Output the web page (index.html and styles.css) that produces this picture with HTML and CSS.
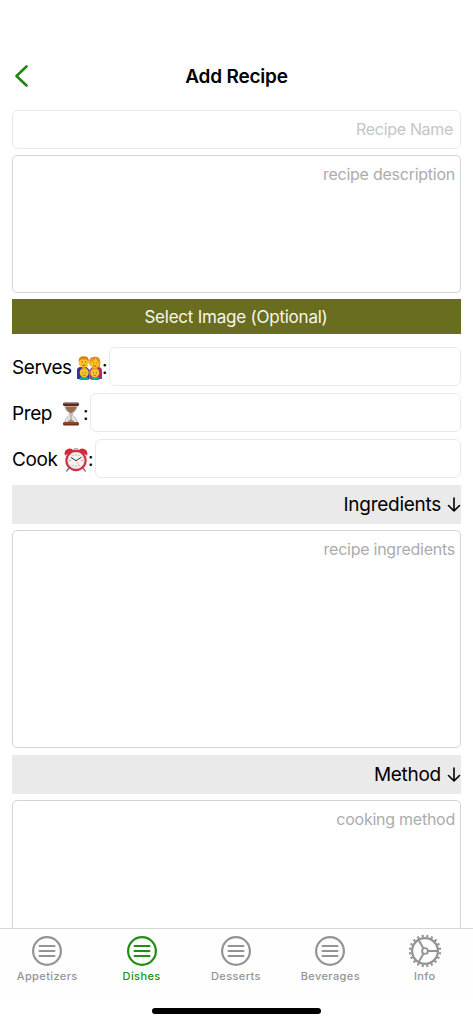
FILE: index.html
```html
<!DOCTYPE html>
<html lang="en">
<head>
<meta charset="utf-8">
<meta name="viewport" content="width=device-width, initial-scale=1">
<title>Add Recipe</title>
<link rel="stylesheet" href="styles.css">
</head>
<body>
<div class="screen">
  <header class="header">
    <svg class="back" width="18" height="26" viewBox="0 0 18 26"><path d="M14.500 3.500 4.500 13 14.500 22.500" fill="none" stroke="#208613" stroke-width="2.600" stroke-linecap="round" stroke-linejoin="round"/></svg>
    <h1 class="title">Add Recipe</h1>
  </header>
  <main class="form">
    <div class="input name"><span>Recipe Name</span></div>
    <div class="area description"><span>recipe description</span></div>
    <div class="select"><span>Select Image (Optional)</span></div>
    <div class="row">
      <span class="label serves">Serves</span>
      <svg class="emoji" width="25" height="24" viewBox="0 0 26 24" preserveAspectRatio="none">
        <path d="M0 23V14q0-3 4-3h6l3 3v9z" fill="#34339b"/>
        <path d="M13 23v-9l3-3h6q4 0 4 4v8z" fill="#b02878"/>
        <path d="M13.500 9C11 3 15 0 19 0.800 25 .5 25 7 23.500 11l-3 1h-4z" fill="#f08a13"/>
        <circle cx="7" cy="6.500" r="5.300" fill="#fbc42d"/>
        <path d="M1.800 6Q1 0 7 .2 13 0 12.200 6L10 3.500H4z" fill="#d68a08"/>
        <circle cx="18.600" cy="7" r="4.700" fill="#fdc52d"/>
        <path d="M14 6q4-1 5-4l4 5V3l-5-2z" fill="#e98a12"/>
        <path d="M5 6h1M8.500 6h1M17 7h.8M20.300 7h.8" stroke="#593c12"/>
        <path d="M5.300 9q1.800 1 3.500 0M17 9.600q1.700 1 3.200 0" fill="none" stroke="#a33a16" stroke-width=".8"/>
        <path d="M2.500 24q0-4 4.800-4T12.500 24zM14 24q0-4 4.700-4t4.800 4z" fill="#0aab99"/>
        <circle cx="7.500" cy="16.800" r="4.700" fill="#f9c72d"/><circle cx="18.500" cy="16.800" r="4.700" fill="#f9c72d"/>
        <path d="M3 15.500q.5-3.500 4.500-3.500t4.500 3.500L9 13.500H6zM14 15.500q.5-3.500 4.500-3.500t4.500 3.500l-3-2h-3z" fill="#dfa31a"/>
        <path d="M5.700 16.700h.8M8.700 16.700h.8M16.700 16.700h.8M19.700 16.700h.8" stroke="#5d3b12"/>
        <path d="M6 19q1.500.8 3 0M17 19q1.500.8 3 0" fill="none" stroke="#a33a16" stroke-width=".7"/>
      </svg>
      <span class="colon">:</span>
      <div class="input grow"></div>
    </div>
    <div class="row">
      <span class="label prep">Prep</span>
      <svg class="emoji hourglass" width="18" height="24" viewBox="0 0 18 24">
        <path d="M2.500 3h13Q15 9 10.500 11v2Q15 16 15.500 21h-13Q3 16 7.500 13v-2Q3 9 2.500 3z" fill="#dce5e8" stroke="#9ca6aa" stroke-width=".7"/>
        <path d="M3.500 4.500h11Q13.800 8.500 9.500 11h-1Q4 8.500 3.500 4.500z" fill="#9c6c49"/>
        <path d="M9 11v8" stroke="#ab7440" stroke-width=".8"/>
        <path d="M5 20.500q1-2 4-3 3 1 4 3z" fill="#b9824c"/>
        <rect x="1" y=".5" width="16" height="3.500" rx="1.500" fill="#5b2818"/><rect x="2" y="1" width="14" height="1" rx=".5" fill="#9b5538"/>
        <rect x="1" y="20" width="16" height="3.500" rx="1.500" fill="#713018"/><rect x="2" y="20.600" width="14" height="1" rx=".5" fill="#a95a38"/>
      </svg>
      <span class="colon">:</span>
      <div class="input grow"></div>
    </div>
    <div class="row">
      <span class="label cook">Cook</span>
      <svg class="emoji" width="24" height="24" viewBox="0 0 24 24">
        <path d="m5 20-2.300 3M19 20l2.300 3" stroke="#777" stroke-width="1.400" stroke-linecap="round"/>
        <path d="M1 7.500Q-.5 3 3.200 1.300 7-.6 9.500 2.500zM23 7.500q1.500-4.500-2.200-6.200Q17-.6 14.500 2.500z" fill="#d3293d"/>
        <path d="M10 2.500V.8h4v1.700" fill="none" stroke="#999"/>
        <circle cx="12" cy="12.500" r="9.600" fill="#f2f3f1" stroke="#d52c3e" stroke-width="2.200"/>
        <circle cx="12" cy="12.500" r="8.200" fill="none" stroke="#b8bdbd" stroke-width=".6"/>
        <path d="M12 6v1.500M12 17.500V19M5.500 12.500H7M17 12.500h1.500M8.700 7l.6 1M15.300 7l-.6 1M8.700 18l.6-1M15.300 18l-.6-1" stroke="#777" stroke-width=".7"/>
        <path d="M7 9.500l5 3.200 5.500-3.500" fill="none" stroke="#333" stroke-width="1"/><path d="M12 12.500l3 5" stroke="#e78e8e" stroke-width=".6"/>
      </svg>
      <span class="colon">:</span>
      <div class="input grow"></div>
    </div>
    <div class="bar"><span>Ingredients</span><svg width="14" height="16" viewBox="0 0 14 16"><path d="M7 1v13M1.500 8.500 7 14l5.500-5.500" fill="none" stroke="#000" stroke-width="1.600" stroke-linecap="round" stroke-linejoin="round"/></svg></div>
    <div class="area ingredients"><span>recipe ingredients</span></div>
    <div class="bar"><span>Method</span><svg width="14" height="16" viewBox="0 0 14 16"><path d="M7 1v13M1.500 8.500 7 14l5.500-5.500" fill="none" stroke="#000" stroke-width="1.600" stroke-linecap="round" stroke-linejoin="round"/></svg></div>
    <div class="area method"><span>cooking method</span></div>
  </main>
  <nav class="tabs">
    <div class="tab"><svg class="icon" viewBox="0 0 34 34"><use href="#list"/></svg><span>Appetizers</span></div>
    <div class="tab active"><svg class="icon" viewBox="0 0 34 34"><use href="#list"/></svg><span>Dishes</span></div>
    <div class="tab"><svg class="icon" viewBox="0 0 34 34"><use href="#list"/></svg><span>Desserts</span></div>
    <div class="tab"><svg class="icon" viewBox="0 0 34 34"><use href="#list"/></svg><span>Beverages</span></div>
    <div class="tab"><svg class="icon" viewBox="0 0 34 34">
      <g fill="none" stroke="currentColor">
        <circle cx="17" cy="17" r="12.900" stroke-width="2.200"/>
        <circle cx="17" cy="17" r="14.900" stroke-width="2.600" pathLength="200" stroke-dasharray="4.400 5.600" stroke-dashoffset="7.200"/>
        <circle cx="17" cy="17" r="2.900" stroke-width="1.900"/>
        <path d="M20 17h9.500M15.500 14.400 10.700 6.100M15.500 19.600l-4.800 8.300" stroke-width="2"/>
      </g></svg><span>Info</span></div>
  </nav>
  <footer class="home"><div class="home-bar"></div></footer>
</div>
<svg width="0" height="0" class="defs"><defs><g id="list" fill="none" stroke="currentColor"><circle cx="17" cy="17" r="13.900" stroke-width="2.200"/><path d="M9.500 12h15M9.500 17h15M9.500 22h15" stroke-width="2" stroke-linecap="round"/></g></defs></svg>
</body>
</html>
```
FILE: styles.css
```css
* { box-sizing: border-box; }
body { margin: 0; background: #fff; color: #000; font-family: Inter, "Liberation Sans", sans-serif; }
.screen { display: flex; flex-direction: column; height: 1024px; width: 473px; overflow: hidden; }
.defs { display: none; }
.header { height: 110px; flex: none; display: grid; grid-template-columns: 36px 1fr 36px; align-items: center; padding: 42px 12px 0; }
.title { margin: 0; padding-top: 1px; font-size: 19px; line-height: 24px; font-weight: 600; text-align: center; letter-spacing: -0.2px; }
.form { height: 818px; flex: none; overflow: hidden; padding: 0 12px; display: flex; flex-direction: column; }
.form > * { flex: none; }
.form span, .tab span { white-space: nowrap; }
.input { height: 39px; border: 1px solid #e9e9e9; border-radius: 6px; }
.name { display: flex; align-items: center; justify-content: flex-end; padding: 0 7px 1px 0; color: #c5c5c7; font-size: 16px; letter-spacing: -0.32px; }
.area { border: 1.5px solid #d4d4d4; border-radius: 5px; display: flex; justify-content: flex-end; padding: 8px 5px 0 0; color: #acacac; font-size: 16px; line-height: 21px; letter-spacing: -0.25px; }
.description { height: 138px; margin-top: 6px; }
.select { height: 35px; margin: 6px 0 13px; background: #696d1f; color: #f7f7ed; display: flex; align-items: center; justify-content: center; font-size: 17px; letter-spacing: -0.23px; padding-right: 1px; }
.row { display: flex; align-items: center; height: 39px; margin-bottom: 7px; font-size: 19px; }
.grow { flex: 1; }
.label { flex: none; padding-top: 2px; letter-spacing: -0.4px; }
.serves { width: 65px; }
.prep { width: 50px; }
.cook { width: 52px; }
.emoji { flex: none; margin-top: 2px; }
.hourglass { margin-right: 3px; }
.colon { flex: none; width: 7px; padding-top: 1px; }
.bar { height: 39px; background: #eaeaea; display: flex; align-items: center; justify-content: flex-end; font-size: 19px; letter-spacing: -0.27px; gap: 6px; }
.ingredients { height: 218px; margin: 6px 0 7px; }
.method { height: 180px; margin-top: 6px; }
.tabs { height: 70px; flex: none; border-top: 1px solid #d7d7d7; display: grid; grid-template-columns: repeat(5, 94.4px); background: #fefefe; }
.tab { display: flex; flex-direction: column; align-items: center; padding-top: 5px; color: #949494; font-size: 11px; line-height: 14px; font-weight: 500; letter-spacing: .4px; }
.icon { width: 34px; height: 34px; margin-bottom: 1px; }
.active { color: #208e13; }
.home { flex: 1; display: flex; justify-content: center; padding-top: 10px; }
.home-bar { width: 169px; height: 6px; border-radius: 3px; background: #000; }
```
